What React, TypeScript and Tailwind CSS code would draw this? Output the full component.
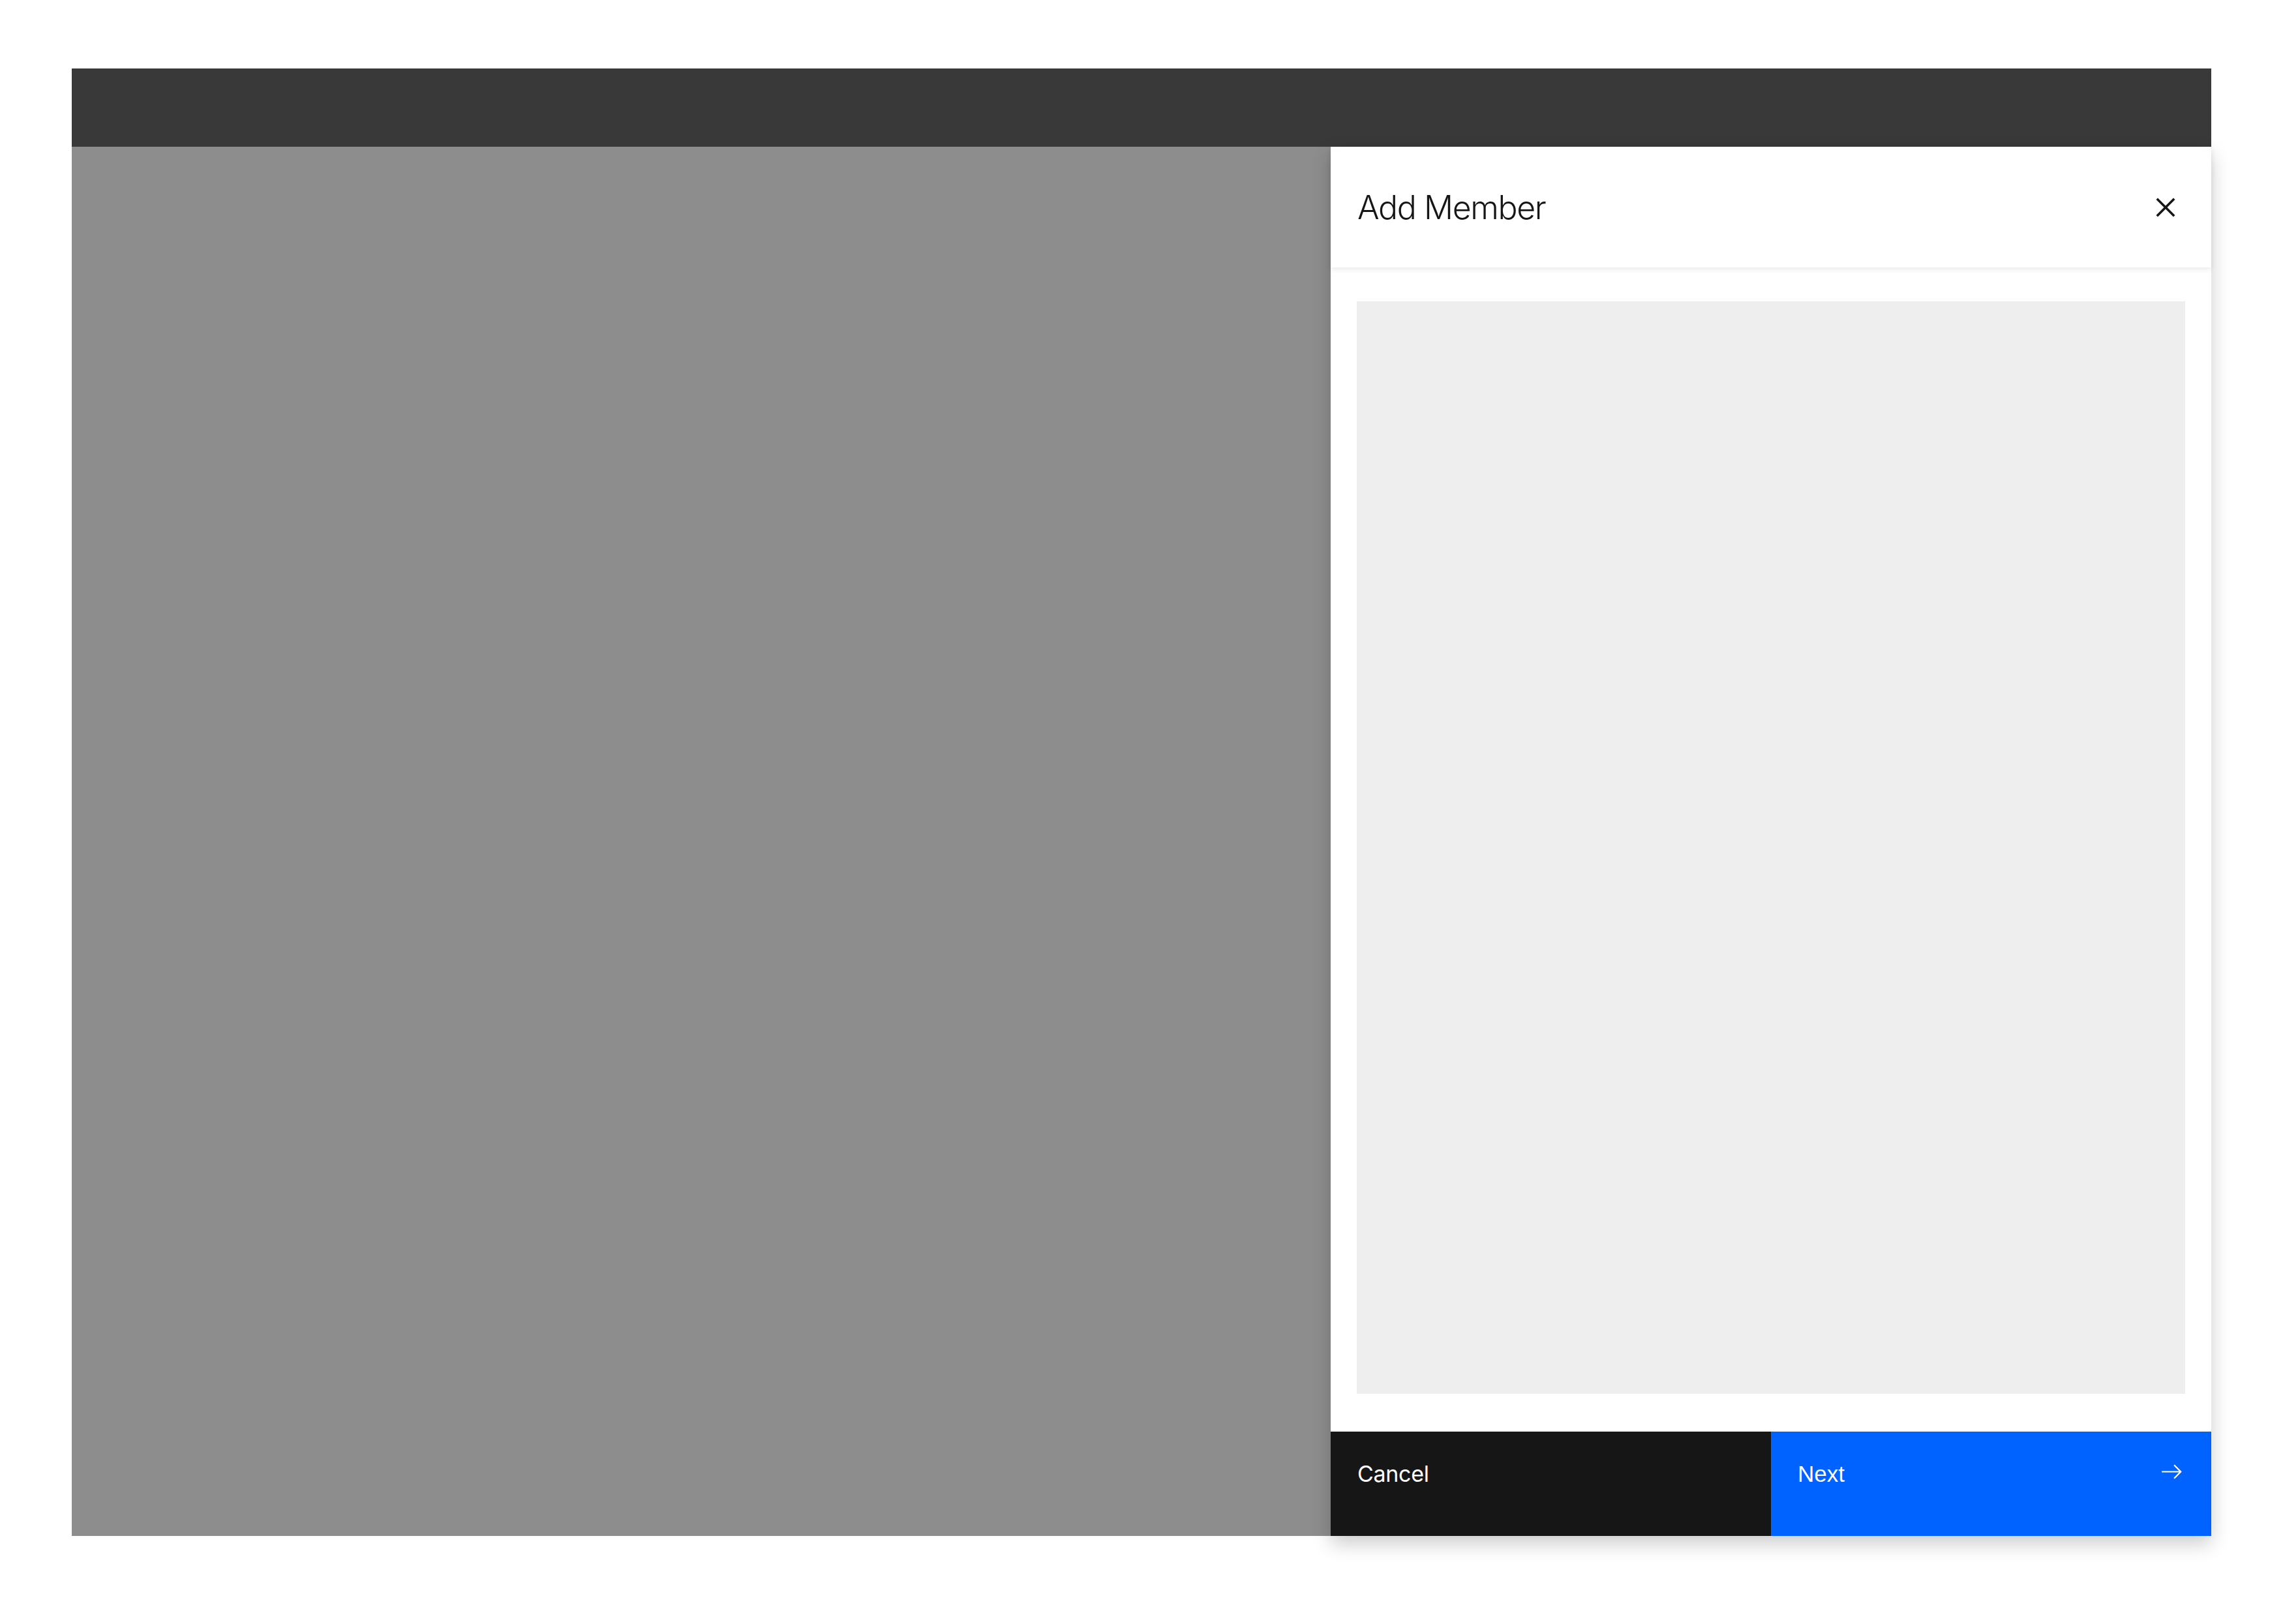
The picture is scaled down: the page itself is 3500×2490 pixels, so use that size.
import React from 'react';

function CloseIcon() {
    return (
        <svg width="58" height="58" viewBox="0 0 32 32" fill="#161616">
            <path d="M24 9.4L22.6 8 16 14.6 9.4 8 8 9.4 14.6 16 8 22.6 9.4 24 16 17.4 22.6 24 24 22.6 17.4 16 24 9.4z" />
        </svg>
    );
}

function ArrowRightIcon() {
    return (
        <svg width="35" height="35" viewBox="0 0 16 16" fill="#ffffff">
            <path d="M9.3 3.7L13.1 7.5 1 7.5 1 8.5 13.1 8.5 9.3 12.3 10 13 15 8 10 3z" />
        </svg>
    );
}

export default function App() {
    return (
        <div className="min-h-screen bg-white pt-[105px] pl-[110px]" style={{ fontFamily: 'Inter, "Open Sans", sans-serif' }}>
            <div className="w-[3280px] h-[2250px] flex flex-col">
                {/* barre du haut */}
                <div className="h-[120px] bg-[#393939] shrink-0"></div>

                <div className="flex-1 flex bg-[#8d8d8d]">
                    <div className="flex-1"></div>

                    {/* panneau latéral */}
                    <div className="w-[1350px] bg-white flex flex-col shadow-[0_12px_28px_rgba(0,0,0,0.2)] relative z-10">
                        <div className="h-[185px] shrink-0 flex items-center justify-between pl-[41px] pr-[41px] relative z-10 shadow-[0_3px_8px_rgba(0,0,0,0.09)]">
                            <h2 className="text-[50px] font-light tracking-[-1.4px] text-[#161616] leading-none">Add Member</h2>
                            <button className="w-[58px] h-[58px] flex items-center justify-center">
                                <CloseIcon />
                            </button>
                        </div>

                        <div className="flex-1 pt-[52px] pb-[58px] px-[40px] flex">
                            <div className="flex-1 bg-[#eeeeee]"></div>
                        </div>

                        <div className="h-[160px] shrink-0 grid grid-cols-2">
                            <button className="bg-[#161616] text-white text-left pl-[41px] pt-[48px] flex items-start text-[34px] tracking-[-0.3px] leading-none">
                                Cancel
                            </button>
                            <button className="bg-[#0062ff] text-white pl-[41px] pr-[43px] pt-[47px] flex items-start justify-between text-[35px] leading-none" style={{ fontFamily: '"Liberation Sans", Arial, sans-serif' }}>
                                <span>Next</span>
                                <span className="-mt-[3px]">
                                    <ArrowRightIcon />
                                </span>
                            </button>
                        </div>
                    </div>
                </div>
            </div>
        </div>
    );
}
